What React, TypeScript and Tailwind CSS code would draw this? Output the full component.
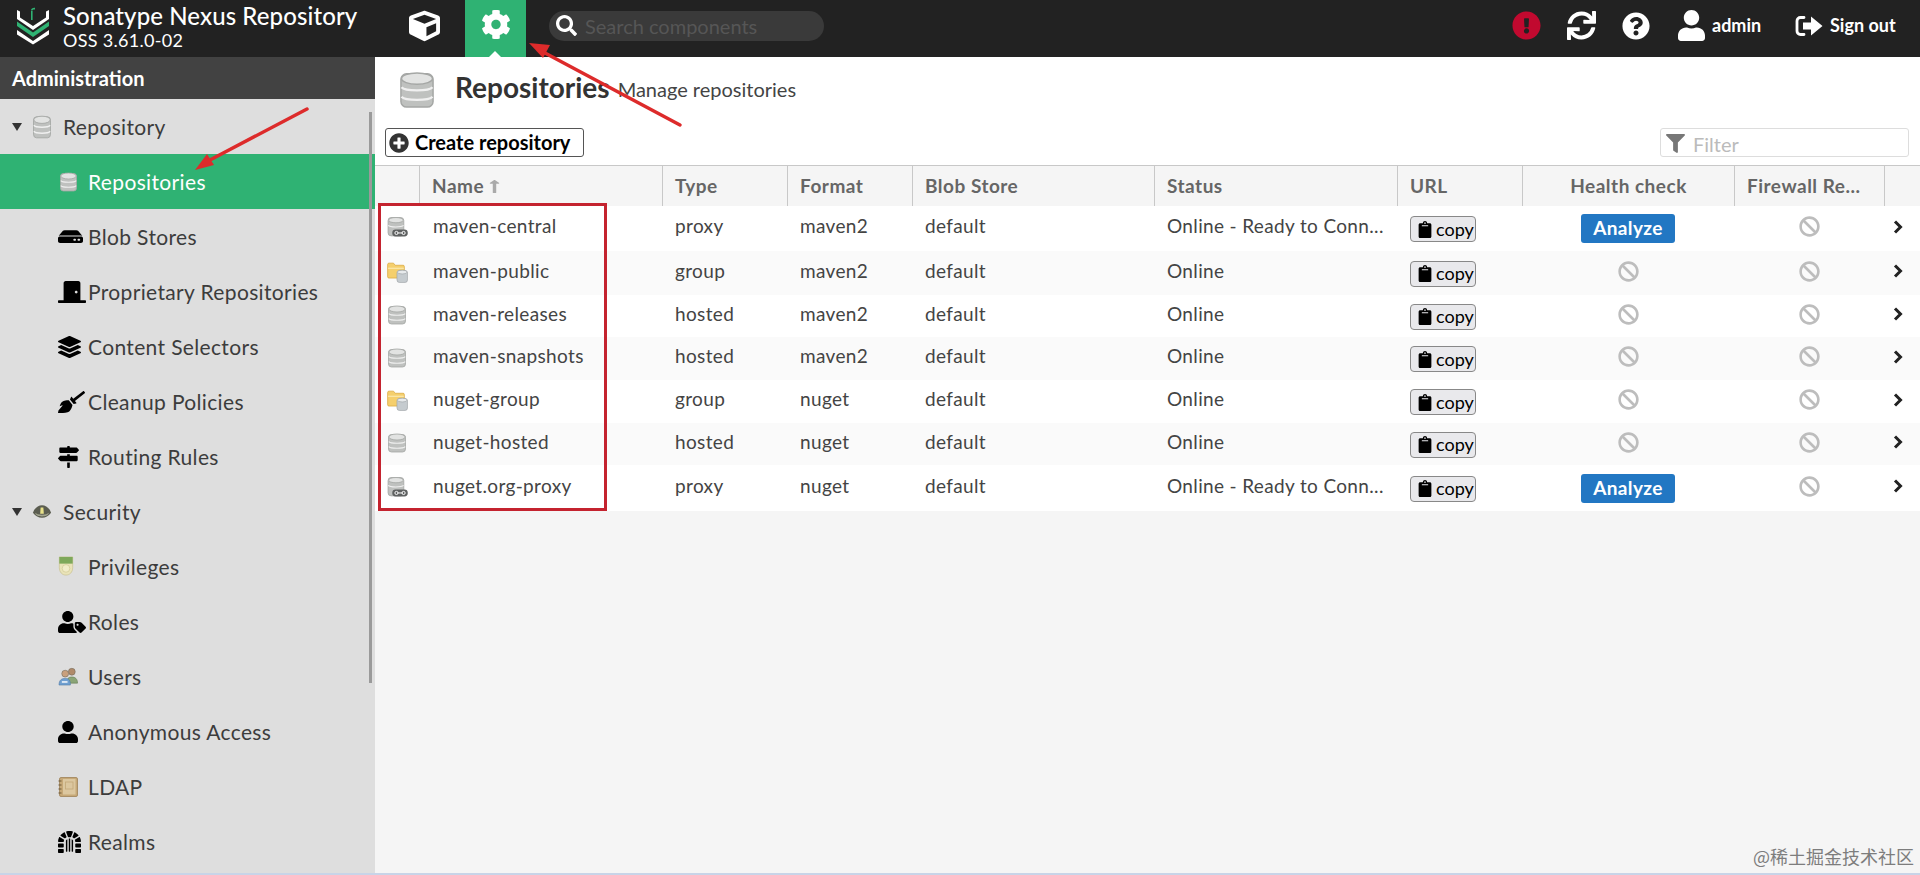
import type { ReactNode } from "react";
import {
  FaBan,
  FaBroom,
  FaClipboard,
  FaCog,
  FaCube,
  FaDoorClosed,
  FaDungeon,
  FaExclamationCircle,
  FaFilter,
  FaHdd,
  FaLayerGroup,
  FaLongArrowAltUp,
  FaMapSigns,
  FaPlusCircle,
  FaQuestionCircle,
  FaSearch,
  FaSync,
  FaUser,
  FaUserTag,
} from "react-icons/fa";

/* gray database cylinder, used all over the place */
function DbIcon({ className }: { className: string }) {
  return (
    <svg viewBox="0 0 18 20" preserveAspectRatio="none" className={className}>
      <rect x="0.500" y="1.500" width="17" height="17.500" rx="3" fill="#bfc1bf" stroke="#a5a7a5" strokeWidth="0.8" />
      <ellipse cx="9" cy="4" rx="8.200" ry="3" fill="#e2e3e2" stroke="#a5a7a5" strokeWidth="0.8" />
      <path d="M0.800 8.600c1.800 2.200 14.600 2.200 16.400 0M0.800 13.600c1.800 2.200 14.600 2.200 16.400 0" fill="none" stroke="#f0f0f0" strokeWidth="1.200" />
    </svg>
  );
}

function ProxyIcon() {
  return (
    <svg viewBox="0 0 20 20" className="w-[21px] h-[21px]">
      <rect x="1" y="0.500" width="15" height="17.500" rx="3" fill="#bfc1bf" stroke="#a0a2a0" strokeWidth="0.7" />
      <ellipse cx="8.500" cy="3" rx="7" ry="2.500" fill="#e2e3e2" stroke="#a0a2a0" strokeWidth="0.7" />
      <path d="M1.200 8c1.500 2 12.600 2 14.600 0" fill="none" stroke="#f0f0f0" strokeWidth="1" />
      <rect x="5" y="12" width="14.800" height="6.500" rx="3.200" fill="#5f6161" />
      <circle cx="9" cy="15.200" r="1.500" fill="none" stroke="#fff" strokeWidth="0.900" />
      <circle cx="15.800" cy="15.200" r="1.500" fill="none" stroke="#fff" strokeWidth="0.900" />
      <path d="M10 15.200h5" stroke="#fff" strokeWidth="0.900" />
    </svg>
  );
}

function GroupIcon() {
  return (
    <svg viewBox="0 0 20 20" className="w-[21px] h-[21px]">
      <path d="M0.600 2.400c0-.8.500-1.300 1.200-1.300h4.400l1.600 2h7.600c.7 0 1.100.5 1.100 1.200v11H1.800c-.7 0-1.200-.5-1.200-1.200z" fill="#f5cf6c" stroke="#d9a63c" strokeWidth="0.7" />
      <path d="M1 6h15" stroke="#fbe7a8" strokeWidth="1.200" />
      <rect x="9.500" y="8" width="10" height="11.500" rx="2.400" fill="#c5cbcf" stroke="#9da3a6" strokeWidth="0.6" />
      <ellipse cx="14.500" cy="9.600" rx="4.600" ry="1.800" fill="#e7eaec" stroke="#9da3a6" strokeWidth="0.6" />
    </svg>
  );
}

function LogoMark() {
  return (
    <svg viewBox="0 0 36 38" className="w-[36px] h-[38px] shrink-0">
      <path d="M2 3v9l16 11 16-11V3l-3 1.500v6L18 19 5 10.500v-6z" fill="#fff" />
      <path d="M2 14.500l16 11 16-11v4.500l-16 11-16-11z" fill="#2fb273" />
      <path d="M2 23l16 11 16-11v4.500L18 37.500 2 27.500z" fill="#fff" />
      <path d="M16 4h1.600v9H16zM16 3.500c0-2 2-3 4-2.700v1.700c-1.300-.2-2.400.2-2.400 1z" fill="#2fb273" />
    </svg>
  );
}

function SignOutIcon() {
  return (
    <svg viewBox="0 0 28 22" className="w-[28px] h-[22px]">
      <path d="M9 2.500H5.500C3.500 2.500 2 4 2 6v10c0 2 1.500 3.500 3.500 3.500H9" fill="none" stroke="#fff" strokeWidth="2.800" strokeLinecap="round" />
      <path d="M8 7.500h8V1.500l11.500 9.500L16 20.500v-6H8z" fill="#fff" />
    </svg>
  );
}

function RowChevron() {
  return (
    <svg viewBox="0 0 10 14" className="w-[10px] h-[14px] -mt-[4px]">
      <path d="M2 1.500L7.500 7 2 12.500" fill="none" stroke="#222" strokeWidth="3" />
    </svg>
  );
}

function MedalIcon() {
  return (
    <svg viewBox="0 0 16 22" className="w-[16px] h-[21px]">
      <path d="M1 1h14v11c0 5-3 8-7 8s-7-3-7-8z" fill="#e9e3b8" stroke="#c8c08e" strokeWidth="0.7" />
      <rect x="1" y="1" width="14" height="7" fill="#7ea85a" />
      <circle cx="8" cy="13" r="4" fill="#f1ecc9" stroke="#cfc792" strokeWidth="0.7" />
    </svg>
  );
}

function UsersIcon() {
  return (
    <svg viewBox="0 0 22 20" className="w-[21px] h-[19px]">
      <circle cx="14.500" cy="5" r="3.600" fill="#b08a6a" stroke="#6f6a5c" strokeWidth="0.6" />
      <path d="M9 17c0-4.500 2-6.500 5.500-6.500s6 2 6 6.500z" fill="#8ba577" stroke="#62784f" strokeWidth="0.6" />
      <circle cx="7.500" cy="7" r="3.600" fill="#c9a07d" stroke="#6f6a5c" strokeWidth="0.6" />
      <path d="M1 19c0-5 2.500-7 6.500-7s5.500 2 5.500 7z" fill="#6f9fd0" stroke="#4f7aa6" strokeWidth="0.6" />
      <rect x="4" y="15" width="6" height="1.500" fill="#fff" />
    </svg>
  );
}

function BookIcon() {
  return (
    <svg viewBox="0 0 20 20" className="w-5 h-5">
      <rect x="1.500" y="0.500" width="18" height="19" rx="1.500" fill="#c6a877" stroke="#98794c" strokeWidth="0.7" />
      <rect x="5" y="2" width="12.500" height="15.500" fill="#dcc79f" />
      <rect x="7.500" y="5" width="7.500" height="7" fill="none" stroke="#c3a878" strokeWidth="0.8" />
      <path d="M0.500 4h3M0.500 8h3M0.500 12h3M0.500 16h3" stroke="#6f5a39" strokeWidth="1.200" />
    </svg>
  );
}

function SecurityIcon() {
  return (
    <svg viewBox="0 0 22 16" className="w-5 h-[15px]">
      <path d="M1 9.500C3 3.500 7 1 11 1s8 2.500 10 8.500C18 13.500 15 15 11 15s-7-1.500-10-5.500z" fill="#5b5d50" />
      <path d="M3.500 9.500C5 11 7 11.500 11 11.500s6-.5 7.500-2c-.500 3-3.500 4-7.500 4s-7-1-7.500-4z" fill="#a3a58f" />
      <path d="M9.500 3.500h3l.5 7h-4z" fill="#e8e28a" />
    </svg>
  );
}

const repoItems: { icon: ReactNode; label: string }[] = [
  { icon: <DbIcon className="w-[17px] h-[20px] ml-[2px]" />, label: "Repositories" },
  { icon: <FaHdd preserveAspectRatio="none" className="w-[25px] h-[17px] text-black" />, label: "Blob Stores" },
  { icon: <FaDoorClosed preserveAspectRatio="none" className="w-[28px] h-[22px] text-black" />, label: "Proprietary Repositories" },
  { icon: <FaLayerGroup preserveAspectRatio="none" className="w-[23px] h-[22px] text-black" />, label: "Content Selectors" },
  { icon: <FaBroom preserveAspectRatio="none" className="w-[27px] h-[22px] text-black" />, label: "Cleanup Policies" },
  { icon: <FaMapSigns preserveAspectRatio="none" className="w-[21px] h-[22px] text-black" />, label: "Routing Rules" },
];

const securityItems: { icon: ReactNode; label: string }[] = [
  { icon: <MedalIcon />, label: "Privileges" },
  { icon: <FaUserTag preserveAspectRatio="none" className="w-[28px] h-[22px] text-black" />, label: "Roles" },
  { icon: <UsersIcon />, label: "Users" },
  { icon: <FaUser preserveAspectRatio="none" className="w-5 h-[22px] text-black" />, label: "Anonymous Access" },
  { icon: <BookIcon />, label: "LDAP" },
  { icon: <FaDungeon preserveAspectRatio="none" className="w-[23px] h-[22px] text-black" />, label: "Realms" },
];

function TreeHead({ icon, label }: { icon: ReactNode; label: string }) {
  return (
    <div className="h-[55px] flex items-center pl-3 text-[21px] tracking-[0.35px] text-[#3c3c3c]">
      <span className="w-0 h-0 border-x-[5.5px] border-x-transparent border-t-[8px] border-t-[#333] mr-[10px]" />
      <span className="w-5 flex justify-center mr-[11px]">{icon}</span>
      {label}
    </div>
  );
}

function TreeItem({ icon, label, active }: { icon: ReactNode; label: string; active?: boolean }) {
  return (
    <div className={`h-[55px] flex items-center pl-[58px] text-[21px] tracking-[0.35px] ${active ? "bg-[#2fb273] text-white" : "text-[#3c3c3c]"}`}>
      <span className="w-[30px] shrink-0 flex">{icon}</span>
      {label}
    </div>
  );
}

function Sidebar() {
  return (
    <aside className="w-[375px] shrink-0 bg-[#dedede] relative overflow-hidden">
      <div className="h-[42px] bg-[#424242] text-white font-bold text-[20px] flex items-center pl-3">Administration</div>
      <div className="absolute left-[369px] top-[55px] w-[3px] h-[571px] bg-[#9a9a9a]" />
      <TreeHead icon={<DbIcon className="w-[18px] h-[24px]" />} label="Repository" />
      {repoItems.map((it, i) => (
        <TreeItem key={it.label} icon={it.icon} label={it.label} active={i === 0} />
      ))}
      <TreeHead icon={<SecurityIcon />} label="Security" />
      {securityItems.map((it) => (
        <TreeItem key={it.label} icon={it.icon} label={it.label} />
      ))}
    </aside>
  );
}

function TopBar() {
  return (
    <header className="h-[57px] shrink-0 bg-[#222222] flex items-center pb-[6px] text-white">
      <div className="w-[409px] shrink-0 flex items-center pl-[15px]">
        <LogoMark />
        <div className="ml-[12px] flex flex-col">
          <span className="text-[24px] leading-[28px] font-medium tracking-[0.1px] whitespace-nowrap">Sonatype Nexus Repository</span>
          <span className="text-[18px] leading-[20px] tracking-[0.3px] whitespace-nowrap">OSS 3.61.0-02</span>
        </div>
      </div>
      <FaCube className="w-[31px] h-[34px]" />
      <div className="ml-[25px] w-[61px] h-[57px] -mb-[6px] bg-[#2fb273] relative flex justify-center pt-[8px]">
        <FaCog className="w-[30px] h-[33px]" />
        <span className="absolute bottom-0 left-[24px] w-0 h-0 border-x-[6px] border-x-transparent border-b-[6px] border-b-white" />
      </div>
      <div className="ml-[23px] w-[275px] h-[30px] rounded-[15px] bg-[#3a3a3a] flex items-center pl-[7px] overflow-hidden">
        <FaSearch className="w-[21px] h-[21px] shrink-0" />
        <span className="ml-2 text-[20px] text-[#565656] whitespace-nowrap">Search components</span>
      </div>
      <FaExclamationCircle className="ml-[688px] w-[29px] h-[29px] text-[#c1092f]" />
      <FaSync className="ml-[26px] w-[29px] h-[29px]" />
      <FaQuestionCircle className="ml-[26px] w-[28px] h-[28px]" />
      <FaUser className="ml-[28px] w-[27px] h-[31px]" />
      <span className="ml-[7px] w-[83px] text-[18px] font-bold">admin</span>
      <SignOutIcon />
      <span className="ml-[7px] text-[18px] font-bold whitespace-nowrap">Sign out</span>
    </header>
  );
}

const cols = "grid grid-cols-[44px_243px_125px_125px_242px_243px_125px_212px_150px_36px]";

const rows = [
  { name: "maven-central", type: "proxy", format: "maven2", status: "Online - Ready to Conn...", h: "h-[45px]", alt: false, analyze: true },
  { name: "maven-public", type: "group", format: "maven2", status: "Online", h: "h-[44px]", alt: true, analyze: false },
  { name: "maven-releases", type: "hosted", format: "maven2", status: "Online", h: "h-[42px]", alt: false, analyze: false },
  { name: "maven-snapshots", type: "hosted", format: "maven2", status: "Online", h: "h-[43px]", alt: true, analyze: false },
  { name: "nuget-group", type: "group", format: "nuget", status: "Online", h: "h-[43px]", alt: false, analyze: false },
  { name: "nuget-hosted", type: "hosted", format: "nuget", status: "Online", h: "h-[42px]", alt: true, analyze: false },
  { name: "nuget.org-proxy", type: "proxy", format: "nuget", status: "Online - Ready to Conn...", h: "h-[46px]", alt: false, analyze: true },
];

function RepoIcon({ type }: { type: string }) {
  if (type === "proxy") return <ProxyIcon />;
  if (type === "group") return <GroupIcon />;
  return <DbIcon className="w-[18px] h-[20px] ml-[1px]" />;
}

function HeadCell({ children, center }: { children?: ReactNode; center?: boolean }) {
  return (
    <div className={`border-l border-[#c8c8c8] flex items-center px-[12px] text-[19px] tracking-[0.5px] font-bold text-[#666] whitespace-nowrap ${center ? "justify-center" : ""}`}>
      {children}
    </div>
  );
}

function RepoTable() {
  return (
    <div>
      <div className={`${cols} h-[41px] bg-[#f5f5f5] border-t border-[#c8c8c8]`}>
        <div />
        <HeadCell>
          Name
          <FaLongArrowAltUp preserveAspectRatio="none" className="ml-[5px] w-[11px] h-[15px] text-[#aaa]" />
        </HeadCell>
        <HeadCell>Type</HeadCell>
        <HeadCell>Format</HeadCell>
        <HeadCell>Blob Store</HeadCell>
        <HeadCell>Status</HeadCell>
        <HeadCell>URL</HeadCell>
        <HeadCell center>Health check</HeadCell>
        <HeadCell>Firewall Re...</HeadCell>
        <HeadCell />
      </div>
      {rows.map((r) => (
        <div key={r.name} className={`${cols} ${r.h} items-center text-[19px] tracking-[0.35px] text-[#444] ${r.alt ? "bg-[#fafafa]" : "bg-white"}`}>
          <div className="pl-[12px] flex -mt-[2px]">
            <RepoIcon type={r.type} />
          </div>
          <div className="pl-[14px] -mt-[4px]">{r.name}</div>
          <div className="pl-[13px] -mt-[4px]">{r.type}</div>
          <div className="pl-[13px] -mt-[4px]">{r.format}</div>
          <div className="pl-[13px] -mt-[4px]">default</div>
          <div className="pl-[13px] -mt-[4px] whitespace-nowrap">{r.status}</div>
          <div className="pl-[13px] mt-[1px]">
            <div className="w-[66px] h-[26px] rounded-[4px] border border-[#888] bg-[#e9e9ec] flex items-center pl-[7px] text-[18px] tracking-normal text-black">
              <FaClipboard className="w-[14px] h-[17px] mr-[4px]" />
              copy
            </div>
          </div>
          <div className="flex justify-center">
            {r.analyze ? (
              <div className="w-[94px] h-[29px] rounded-[3px] bg-[#2277c3] text-white font-bold text-[19px] flex items-center justify-center">Analyze</div>
            ) : (
              <FaBan className="w-[21px] h-[21px] text-[#bdbdbd] -mt-[4px]" />
            )}
          </div>
          <div className="flex justify-center">
            <FaBan className="w-[21px] h-[21px] text-[#bdbdbd] -mt-[4px]" />
          </div>
          <div className="flex pl-[9px]">
            <RowChevron />
          </div>
        </div>
      ))}
    </div>
  );
}

function MainPanel() {
  return (
    <main className="flex-1 min-w-0 flex flex-col bg-[#f5f5f5]">
      <div className="bg-white">
        <div className="h-[71px] flex items-center pl-[25px]">
          <DbIcon className="w-[34px] h-[38px] -mt-[6px]" />
          <span className="ml-[21px] text-[28px] font-bold text-[#333] -mt-[11px]">Repositories</span>
          <span className="ml-[8px] text-[20px] text-[#444] -mt-[8px]">Manage repositories</span>
        </div>
        <div className="h-[37px] flex items-start justify-between pl-[10px] pr-[11px]">
          <div className="w-[199px] h-[29px] rounded-[3px] border border-[#555] bg-white flex items-center pl-[3px] pb-[2px] text-[20px] font-bold text-black">
            <FaPlusCircle className="w-[20px] h-[20px] mr-[6px] mt-[2px] text-[#333]" />
            Create repository
          </div>
          <div className="w-[249px] h-[29px] rounded-[3px] border border-[#ddd] bg-white flex items-center pl-[4px] pt-[2px] text-[20px] text-[#bbb]">
            <FaFilter className="w-[21px] h-[19px] mr-[7px] text-[#777]" />
            Filter
          </div>
        </div>
      </div>
      <RepoTable />
    </main>
  );
}

export default function App() {
  return (
    <div className="w-[1920px] h-[875px] relative overflow-hidden flex flex-col [font-family:Lato,sans-serif]">
      <TopBar />
      <div className="flex flex-1 min-h-0">
        <Sidebar />
        <MainPanel />
      </div>
      <div className="h-[2px] shrink-0 bg-[#c8d4e8]" />

      {/* 红框 */}
      <div className="absolute left-[378px] top-[203px] w-[229px] h-[308px] border-[3px] border-[#c4232f]" />

      {/* 红色箭头 */}
      <svg className="absolute inset-0 pointer-events-none" width="1920" height="875">
        <line x1="307" y1="109" x2="210" y2="160" stroke="#dd2b2b" strokeWidth="3.500" strokeLinecap="round" />
        <path d="M195 170l12-16 7 11z" fill="#dd2b2b" />
        <line x1="680" y1="125" x2="545" y2="53" stroke="#dd2b2b" strokeWidth="3.500" strokeLinecap="round" />
        <path d="M529 43l21 2-7 13z" fill="#dd2b2b" />
      </svg>

      {/* 水印 */}
      <div className="absolute left-[1753px] top-[843px] text-[18px] text-[#7d7d7d] whitespace-nowrap [font-family:'Noto_Sans_CJK_SC',sans-serif]">@稀土掘金技术社区</div>
    </div>
  );
}
